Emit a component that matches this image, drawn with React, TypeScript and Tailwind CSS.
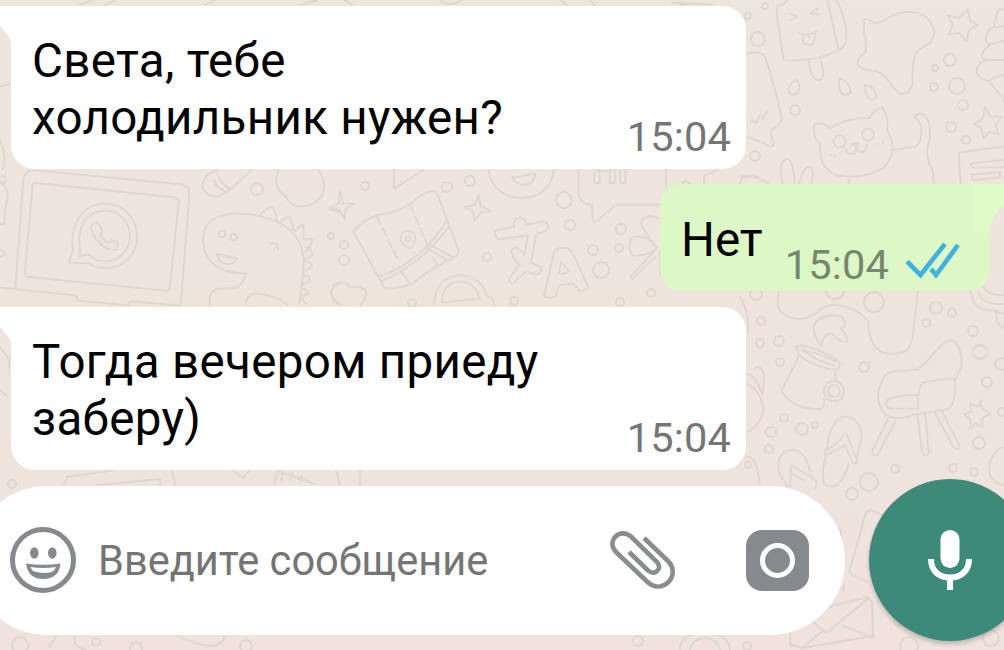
import React from 'react';
import clsx from 'clsx';

interface Message {
  lines: string[];
  time: string;
}

const firstMessage: Message = { lines: ['Света, тебе', 'холодильник нужен?'], time: '15:04' };
const reply: Message = { lines: ['Нет'], time: '15:04' };
const lastMessage: Message = { lines: ['Тогда вечером приеду', 'заберу)'], time: '15:04' };

// x, y, radius
const bubbles: number[][] = [
  [257, 189, 6], [365, 186, 4], [447, 187, 5], [470, 181, 5], [564, 200, 8], [570, 225, 5],
  [331, 236, 3], [344, 245, 4], [344, 260, 5], [487, 257, 4], [621, 229, 5], [593, 250, 5], [619, 248, 4],
  [601, 270, 8], [651, 293, 4], [514, 301, 4], [412, 303, 4], [620, 302, 4], [2, 180, 4],
  [748, 16, 3], [765, 6, 3], [758, 39, 7], [795, 110, 5], [755, 156, 5], [950, 60, 6], [935, 68, 3],
  [934, 87, 4], [957, 86, 8], [963, 105, 5], [951, 127, 5], [966, 140, 4],
  [756, 294, 6], [874, 302, 10], [936, 308, 6], [952, 313, 4], [926, 323, 4], [761, 321, 4], [760, 343, 4],
  [779, 341, 5], [780, 362, 4], [973, 331, 5], [980, 352, 7], [864, 367, 5], [987, 382, 5], [1001, 364, 6],
  [834, 391, 10], [834, 391, 6], [784, 418, 4], [771, 432, 5], [802, 429, 6], [815, 425, 3], [769, 449, 4],
  [979, 443, 6], [895, 469, 4], [953, 468, 4], [974, 472, 4], [869, 482, 9], [852, 494, 6], [748, 465, 3],
  [12, 484, 4], [20, 645, 8], [96, 642, 4], [136, 648, 6], [246, 646, 6], [638, 641, 5], [747, 646, 4],
  [900, 620, 6], [909, 646, 9], [991, 638, 8], [835, 289, 10], [1002, 412, 4],
];

function Wallpaper() {
  return (
    <svg
      className="absolute inset-0 -z-10 h-full w-full"
      viewBox="0 0 1004 650"
      fill="none"
      stroke="#dfd6cd"
      strokeWidth="1.9"
      strokeLinecap="round"
      strokeLinejoin="round"
    >
      {bubbles.map(([x, y, r], i) => (
        <circle key={i} cx={x} cy={y} r={r} />
      ))}

      {/* laptop and dinosaur */}
      <g transform="translate(0 160) scale(.3333)" strokeWidth="5.5">
        <path d="M46 385L70 60Q74 28 106 31L545 73Q570 78 568 104L542 434M98 72Q100 68 108 69L525 112Q537 114 536 124L510 382Q508 394 496 392L86 351Q74 348 75 336ZM0 382L224 406Q232 408 233 422L384 436Q386 424 400 425L540 436" />
        <path d="M219 270C208 190 250 131 315 131C370 131 411 175 411 230C411 285 370 325 315 325C295 325 280 320 265 310L206 308Z" />
        <path d="M240 272C230 205 255 152 315 152C360 152 390 188 390 228C390 272 356 304 315 304C296 304 278 296 264 283L238 288Z" />
        <path d="M292 187Q278 188 272 202C282 238 308 270 345 271Q355 262 353 249L336 240L323 249Q306 238 301 220L306 211Z" />
        <path d="M630 434Q622 394 655 386L706 384Q728 376 739 340C700 342 655 330 633 305C600 265 600 205 640 178C690 150 770 160 830 185C880 208 906 240 911 300Q910 370 897 432M738 434Q740 398 775 401Q825 404 862 434M650 282Q686 290 711 296Q700 312 684 312Q660 312 650 282M812 250Q834 246 834 268" />
        <path d="M778 168Q800 142 815 141Q830 148 830 184M838 188Q856 172 866 171Q880 185 880 210M884 214Q896 198 910 195L911 236M911 238L937 236Q934 262 916 276M916 262Q940 272 938 286L916 298M916 304Q936 308 936 320L912 336M914 346Q932 350 930 362L908 374M910 386Q926 390 926 400L904 410M904 414L920 432" />
        <circle cx="666" cy="222" r="10" />
        <circle cx="701" cy="232" r="10" />
        <path d="M622 44Q604 66 609 88Q624 112 656 110Q690 92 702 78L756 30M622 44L654 30M652 42Q660 72 694 88M640 60Q652 86 682 98M836 30C818 65 834 95 858 110C868 138 905 148 940 130C975 115 984 65 955 30M1018 95V128L988 148L1018 155M0 62Q26 82 22 122Q12 145 14 192L0 194M0 268L18 282L0 290M1018 372Q992 376 995 405Q1000 425 1018 434" />
      </g>

      {/* map, smile, lock */}
      <g transform="translate(330 160) scale(.3333)" strokeWidth="5.5">
        <path d="M192 30V86L280 30M32 98L38 130L74 132L46 146L44 178L28 150L0 142M446 106L452 138L482 152L452 158L434 182L428 152L402 142L434 134Z" />
        <path d="M70 215Q100 180 140 166Q200 158 240 132Q280 98 310 92Q320 95 326 112L386 272Q388 285 370 294Q300 325 246 372Q200 388 164 384Z" />
        <path d="M140 170L206 304M240 134L294 258" strokeDasharray="26 12" />
        <path d="M150 350Q280 300 350 182M158 362Q282 306 356 200M294 252L366 290M286 262L354 302M214 334L244 376M308 292L320 312" />
        <path d="M240 266Q210 250 212 232Q216 212 236 213Q260 216 256 240Q250 258 240 266M4 400Q4 372 30 368Q50 368 60 382Q90 376 106 390Q114 410 92 434M4 400Q8 420 34 434" />
        <circle cx="234" cy="237" r="8" />
        <path d="M476 30C482 80 520 114 574 114C630 114 665 80 672 30M546 54L616 40Q612 74 580 74Q560 72 546 54" />
        <path d="M312 434C312 380 345 346 388 346C435 346 460 372 470 406Q490 412 494 434M336 428C336 390 355 365 388 365C425 365 440 388 450 415Z" />
        <path d="M746 30V104Q750 134 786 134L788 182Q794 190 802 182L858 134H990M1008 30V80M986 176Q960 160 936 178Q930 194 948 218Q962 244 980 262Q950 220 906 232Q890 262 908 286Q940 292 978 268L902 350L906 358L976 290M990 276V340L1002 358" />
        <path d="M495 212L552 200Q550 174 570 172Q590 176 586 194L640 184Q656 186 654 204Q650 216 618 222Q612 270 602 308L632 320Q640 332 622 344L588 334L548 370Q534 368 538 356L568 314Q545 290 544 270Q556 258 570 270L584 284L594 226L506 238Q494 232 495 212" />
        <path d="M672 276Q684 260 708 264Q724 268 730 282L774 380Q770 394 748 392L730 370L686 376L678 408Q660 418 642 408ZM694 306L686 340Q704 344 716 334Z" />
      </g>
      <text x="592" y="183" fontFamily="Roboto" fontSize="36" fontWeight="700" strokeWidth="1.6">HI</text>

      {/* ice cream, stars, cat */}
      <g transform="translate(740 0) scale(.3333)" strokeWidth="5.5">
        <path d="M140 0Q136 14 112 18L110 38L130 176Q135 188 220 176Q270 166 296 150L262 0M296 150Q318 140 320 108Q318 50 288 0M206 180L214 222Q222 242 240 240Q252 234 249 210L242 172M150 40L172 49L152 60M232 26L210 40L236 44M178 98Q194 112 230 94M188 106V126Q204 142 222 130L226 98M208 112V104" />
        <path d="M372 58Q376 52 402 68Q424 72 450 50Q490 30 530 38Q575 50 583 98Q580 128 552 140Q525 152 522 178Q516 220 518 250Q510 284 485 282Q465 276 448 246Q425 214 400 212Q365 212 352 194Q354 170 376 156Q382 130 372 100Z" />
        <path d="M684 28L690 62L714 76L688 90L680 124L656 98L626 104L638 74L624 46L656 54ZM736 320L750 350L784 350L766 376L776 402L750 396L730 414L724 384L702 372L728 356Z" />
        <path d="M792 28H776L760 82Q736 92 738 126L752 134Q724 150 726 172L738 180Q708 192 710 218Q722 240 748 244L792 300M760 82L792 78M752 134Q770 128 792 122M738 180H792M748 244Q758 228 792 226" />
        <path d="M172 240Q148 248 146 270Q148 286 164 284Q182 278 178 256ZM300 234Q294 256 300 274Q314 294 332 278Q334 252 300 234M376 254Q372 276 384 294Q400 304 410 286Q406 262 376 254" />
        <path d="M20 160Q64 152 74 170Q102 246 126 358Q124 372 94 388Q92 414 102 434Q88 446 72 430L20 410M34 360L48 370L60 346M66 358L82 334M0 530Q50 524 84 550M128 550Q112 484 142 476Q158 476 164 550M178 550Q190 502 210 500Q226 506 214 550" />
        <path d="M240 430C222 420 214 372 230 371Q252 368 272 384Q320 352 388 354Q400 330 426 322Q446 346 442 392C466 430 462 470 430 504C390 530 330 534 290 526C252 514 238 480 240 430M460 450Q500 444 526 440Q544 430 544 398Q546 366 524 350Q532 338 552 344Q576 366 568 420Q552 470 578 510L582 550M326 530V550M318 446Q320 464 338 462Q350 460 348 440Q352 456 368 456Q382 450 380 434M336 432L356 428L350 440Z" />
        <circle cx="299" cy="424" r="18" />
        <circle cx="384" cy="404" r="18" />
        <path d="M272 466V464M284 470V468M414 432V430M428 428V426M662 550L656 470Q656 456 668 456L792 440M694 490L792 480M700 502H792M694 490Q690 502 700 502M694 524L780 516V532L700 540Z" />
      </g>

      {/* mug, chair, slippers */}
      <g transform="translate(740 280) scale(.3333)" strokeWidth="5.5">
        <path d="M116 32C104 90 120 110 180 118C230 112 240 76 280 74Q350 80 384 124C390 180 400 214 440 220C500 228 512 204 518 170L534 32M0 50Q30 100 24 160" />
        <path d="M244 196Q222 170 220 140Q236 102 290 107Q318 110 314 140L302 146Q326 164 320 186Q290 184 280 164Q252 154 244 196" />
        <path d="M168 202Q180 190 218 206Q290 230 300 252Q298 270 274 270Q206 250 178 226ZM188 204Q210 236 282 256M184 212Q230 216 288 244M176 230L124 332C150 378 200 392 246 386Q256 376 252 356M286 276V298M44 264Q66 250 72 290L68 346M20 280Q48 286 68 346M20 312Q64 330 70 390Q62 440 20 456" />
        <path d="M432 292C445 265 500 276 530 268C570 250 590 192 632 180C665 188 670 254 660 272L645 298Q650 380 620 388C580 394 560 398 524 404C500 416 450 422 432 398C406 366 410 330 432 292M645 296Q560 302 546 310Q532 330 534 386M534 345Q470 344 442 360Q434 384 450 386H532" />
        <path d="M444 418L398 510Q394 528 412 526L466 424M532 402L546 516Q556 536 566 520L556 400M584 396L642 504Q660 514 658 496L604 390" />
        <path d="M724 360L722 380L750 402L726 414L728 442L706 430L690 448L692 420L672 404L694 394L688 370L714 380ZM692 34Q700 90 748 92H768L772 128L792 150M712 34Q726 76 792 72M730 20Q742 46 792 46M766 92L792 104M792 500C754 512 740 560 752 590Q768 614 792 614" />
        <path d="M262 510C264 460 280 410 320 409C358 416 370 454 362 486Q352 510 350 550L338 548L316 496L256 526L254 512Q292 496 318 458L348 534M258 526Q244 570 252 610Q276 632 300 606Q320 580 326 550" />
        <path d="M118 580C108 530 130 510 160 509C198 518 205 550 214 592L230 604L226 626M150 622L154 556L214 592M118 580L144 620M154 580L190 600M20 530Q50 526 60 612" />
      </g>

      {/* envelope and box by the input row */}
      <path d="M866 512L870 510L892 519M866 512L849 573L868 582M841 542V530M788 617L868 597L872 602L873 636L802 648L790 644M801 612L826 633L868 599M802 648L824 630M844 626L873 638M844 585L843 592M789 620L791 647" />
      <path d="M64 484L67 477L115 470M97 485L160 479V485M172 470L175 485M233 470L243 478L250 470M274 484L278 471L315 484M283 472L281 480M292 473L290 480M302 476L300 482M336 470L340 485M360 470V485M176 634Q194 646 214 646Q226 642 224 634M58 634L48 648M76 634Q70 646 86 650M680 650C678 628 728 625 730 650M690 650C692 634 718 634 720 650" />
      <path d="M0 348Q12 360 9 368M0 390L7 396M0 86L11 84M0 140Q8 160 2 170M80 5L92 0M105 5L116 0M205 5L215 0M300 5L318 0M345 0L352 5M440 0Q450 8 462 0M560 0L567 5M590 0L594 5M672 3Q688 2 702 5M680 5Q700 2 712 5M704 184L704 176L718 170M740 184Q740 174 758 177M683 184Q683 178 690 184" />
    </svg>
  );
}

function MessageTime({ time, className }: { time: string; className?: string }) {
  return <span className={clsx('text-[41.5px] leading-none tracking-[0.2px]', className)}>{time}</span>;
}

function IncomingMessage({ message }: { message: Message }) {
  return (
    <div className="relative ml-[11px] flex h-[163px] w-[735px] items-end justify-between rounded-[24px] rounded-tl-none bg-white pr-[15px] pl-[21px]">
      <svg className="absolute top-0 right-full h-10 w-[11px]" viewBox="0 0 11 40" fill="#fff">
        <path d="M0 0H12V40Q11 33 7 28L0 20Z" />
      </svg>
      <p className="self-start pt-[27px] text-[47.5px] leading-[57px] tracking-[0.33px] text-black">
        {message.lines.map((line) => (
          <span key={line} className="block whitespace-nowrap">
            {line}
          </span>
        ))}
      </p>
      <MessageTime time={message.time} className="pb-[12px] text-[#757575]" />
    </div>
  );
}

function OutgoingMessage({ message }: { message: Message }) {
  return (
    <div className="relative mr-[14px] flex h-[107px] w-[330px] self-end rounded-[22px] rounded-tr-none bg-[#ddf8c6] pl-[21px]">
      <svg className="absolute top-0 -right-[14px] h-12 w-[30px]" viewBox="0 0 30 48" fill="#e0fbc8">
        <path d="M0 0H30V20Q18 31 16 48H0Z" />
      </svg>
      <p className="relative pt-[28px] text-[47.5px] leading-[57px] text-black">{message.lines[0]}</p>
      <MessageTime time={message.time} className="pt-[60px] pl-[22px] text-[#78866f]" />
      <svg className="mt-[57px] ml-4 h-[38px] w-[56px]" viewBox="0 0 56 38" fill="none" stroke="#40b2df" strokeWidth="4.6">
        <path d="M2 20.5L15.500 34L40 3" />
        <path d="M26 28L31 34L53 4" />
      </svg>
    </div>
  );
}

function SmileIcon() {
  return (
    <svg className="h-[66px] w-[66px]" viewBox="0 0 66 66" fill="none">
      <circle cx="33" cy="33" r="30.500" stroke="#868a8f" strokeWidth="5" />
      <ellipse cx="24.300" cy="26" rx="4.300" ry="5.800" fill="#868a8f" />
      <ellipse cx="42.300" cy="26" rx="4.300" ry="5.800" fill="#868a8f" />
      <path d="M16 36.500Q33 39 50.500 36.500Q49 52 33 52Q18 52 16 36.500Z" fill="#868a8f" />
      <path d="M20.500 40Q33 42 46 40Q45 43 42 45Q33 47 24 44.500Q21.500 43 20.500 40Z" fill="#fff" />
    </svg>
  );
}

function ClipIcon() {
  return (
    <svg className="mt-[2px] h-[60px] w-[66px]" viewBox="0 0 66 60" fill="none" stroke="#8a8d90" strokeWidth="4.600">
      <path d="M34 7L57.500 29.500C64.500 36 64 45 58.500 51C52 57 44 57 37.500 51L6.500 21.500C1 16 1.500 10 5.500 5.500C10 1 16.500 1.500 21.500 6L47 31C50 34.500 49.500 38 47 40C44.500 42.500 41 42 38 39.500L19 21" />
    </svg>
  );
}

function CameraIcon() {
  return (
    <div className="flex h-[61px] w-[63px] items-center justify-center rounded-[16px] bg-[#868a8f]">
      <div className="size-[35px] rounded-full border-[5px] border-white" />
    </div>
  );
}

function MicIcon() {
  return (
    <svg className="h-[60px] w-[44px]" viewBox="0 0 44 60" fill="none">
      <rect x="12.500" y="0" width="19" height="38" rx="9.500" fill="#fff" />
      <path d="M3 29C3 41 11 47.500 22 47.500C33 47.500 41 41 41 29M22 47V60" stroke="#fff" strokeWidth="6" />
    </svg>
  );
}

export default function App() {
  return (
    <div className="relative isolate flex h-[650px] w-[1004px] flex-col overflow-hidden bg-linear-to-b from-[#ede6dd] to-[#f0e2dd] pt-[6px] font-[Roboto,sans-serif]">
      <Wallpaper />

      <main className="flex flex-col">
        <IncomingMessage message={firstMessage} />
        <div className="mt-[15px] mb-[16px] flex flex-col">
          <OutgoingMessage message={reply} />
        </div>
        <IncomingMessage message={lastMessage} />
      </main>

      <footer className="mt-[9px] flex items-center">
        <div className="-ml-7 flex h-[149px] w-[873px] shrink-0 items-center rounded-full bg-white pl-[38px]">
          <SmileIcon />
          <span className="ml-[22px] w-[512px] pt-[2px] text-[41.6px] leading-none whitespace-nowrap text-[#757575]">
            Введите сообщение
          </span>
          <ClipIcon />
          <div className="ml-[70px]">
            <CameraIcon />
          </div>
        </div>
        <button className="ml-6 flex size-[162px] shrink-0 items-center justify-center rounded-full bg-[#3d8a7b] shadow-[0_3px_4px_rgba(0,0,0,0.2)]">
          <MicIcon />
        </button>
      </footer>
    </div>
  );
}
